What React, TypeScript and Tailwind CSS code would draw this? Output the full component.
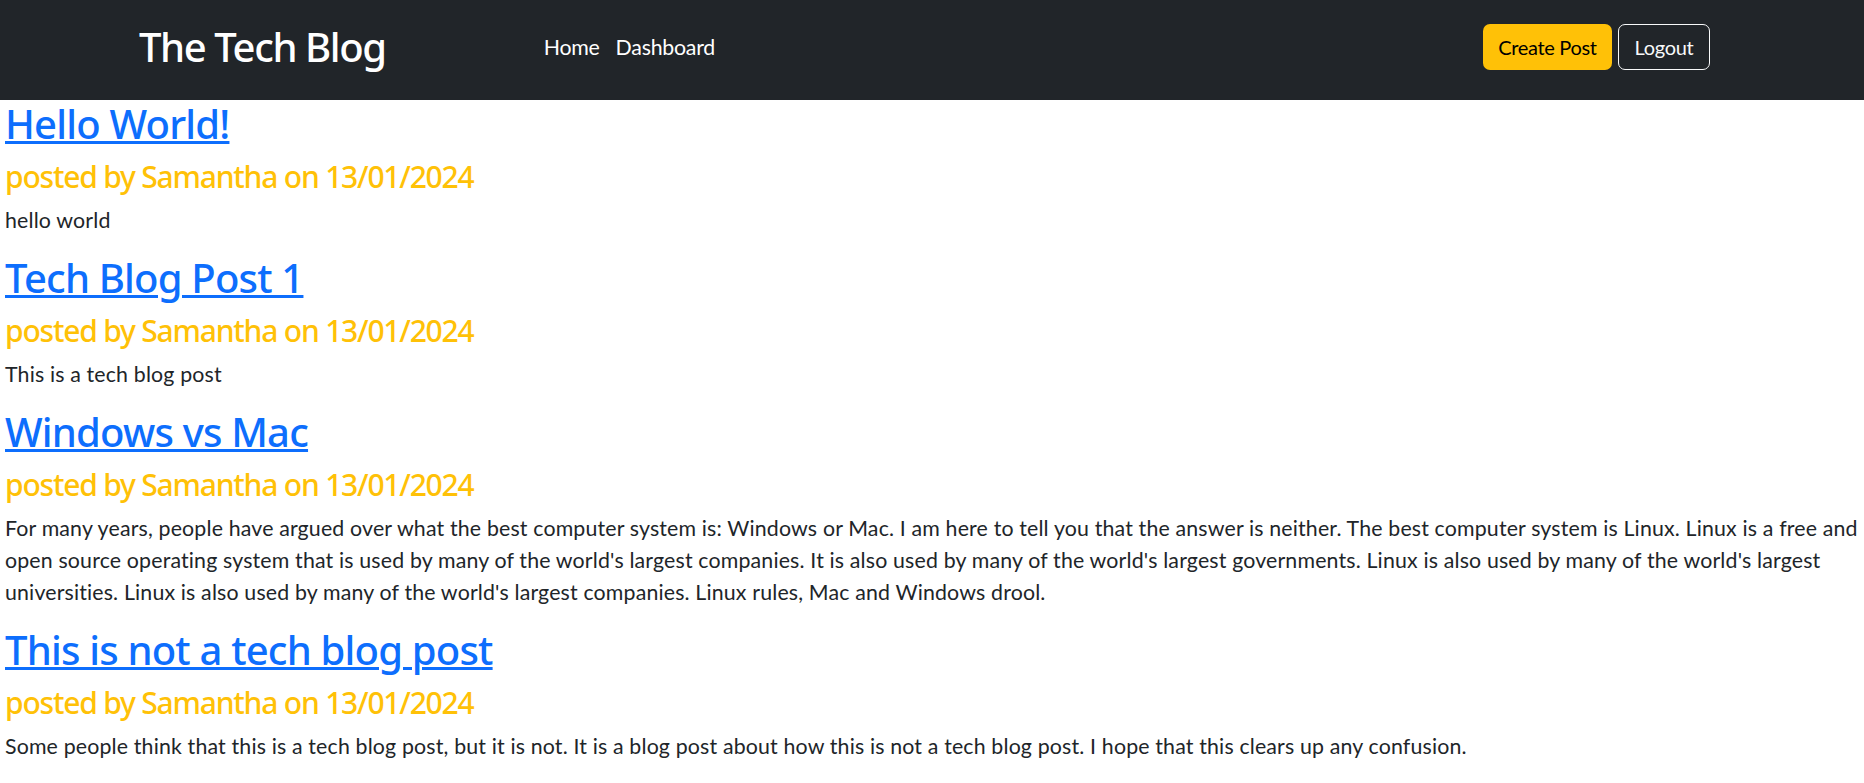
const posts = [
  {
    title: "Hello World!",
    author: "Samantha",
    date: "13/01/2024",
    body: "hello world",
  },
  {
    title: "Tech Blog Post 1",
    author: "Samantha",
    date: "13/01/2024",
    body: "This is a tech blog post",
  },
  {
    title: "Windows vs Mac",
    author: "Samantha",
    date: "13/01/2024",
    body: "For many years, people have argued over what the best computer system is: Windows or Mac. I am here to tell you that the answer is neither. The best computer system is Linux. Linux is a free and open source operating system that is used by many of the world's largest companies. It is also used by many of the world's largest governments. Linux is also used by many of the world's largest universities. Linux is also used by many of the world's largest companies. Linux rules, Mac and Windows drool.",
  },
  {
    title: "This is not a tech blog post",
    author: "Samantha",
    date: "13/01/2024",
    body: "Some people think that this is a tech blog post, but it is not. It is a blog post about how this is not a tech blog post. I hope that this clears up any confusion.",
  },
]

function Navbar() {
  return (
    <nav className="h-[100px] bg-[#212529] flex items-center pl-[139px] pr-[154px] pb-[6px]">
      <a
        href="#"
        className="font-['Noto_Sans',sans-serif] text-[40px] leading-[48px] font-medium tracking-[-0.035em] text-white"
      >
        The Tech Blog
      </a>
      <div className="ml-[158px] flex items-center gap-[16px] tracking-[-0.015em]">
        <a href="#" className="text-[21.33px] leading-[32px] text-white">
          Home
        </a>
        <a href="#" className="text-[21.33px] leading-[32px] text-white">
          Dashboard
        </a>
      </div>
      <div className="ml-auto flex items-center gap-[6px] tracking-[-0.02em]">
        <button className="h-[46px] w-[129px] rounded-[7px] bg-[#ffc107] text-black text-[20px] leading-[32px]">
          Create Post
        </button>
        <button className="h-[46px] w-[92px] rounded-[7px] border border-[#f8f9fa] text-[#f8f9fa] text-[20px] leading-[32px]">
          Logout
        </button>
      </div>
    </nav>
  )
}

export default function App() {
  return (
    <div className="min-h-screen bg-white font-['Lato',sans-serif] tracking-[0.01em] text-[#212529]">
      <Navbar />
      <main className="px-[5px] pt-[4px]">
        {posts.map((post) => (
          <article key={post.title}>
            <h2 className="font-['Noto_Sans',sans-serif] text-[40px] leading-[40px] font-medium tracking-[-0.02em] mb-[15px]">
              <a
                href="#"
                className="text-[#0d6efd] underline decoration-[3px] underline-offset-[2px]"
              >
                {post.title}
              </a>
            </h2>
            <h4 className="font-['Noto_Sans',sans-serif] text-[30px] leading-[36px] font-medium tracking-[-0.04em] text-[#ffc107] mb-[9px]">
              posted by {post.author} on {post.date}
            </h4>
            <p className="text-[21.33px] leading-[32px] mb-[22px]">{post.body}</p>
          </article>
        ))}
      </main>
    </div>
  )
}
